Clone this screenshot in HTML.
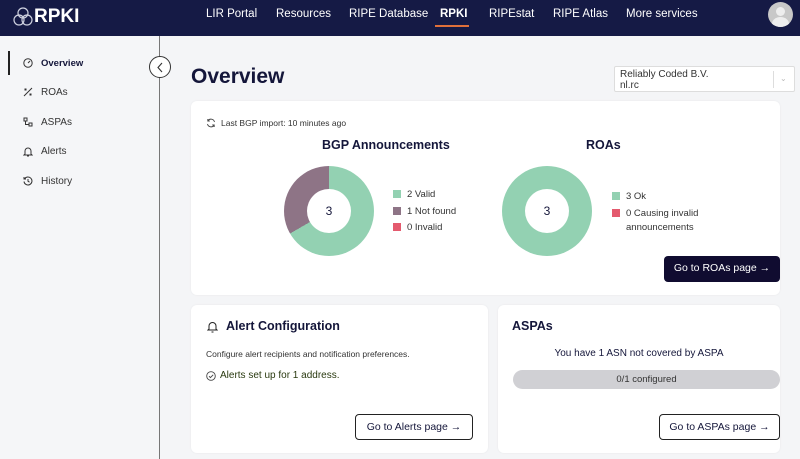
<!DOCTYPE html>
<html><head><style>
*{margin:0;padding:0;box-sizing:border-box}
body{width:800px;height:459px;overflow:hidden;background:#f4f5f7;font-family:"Liberation Sans",sans-serif;color:#14163a;position:relative}
.hdr{position:absolute;left:0;top:0;width:800px;height:36px;background:#151a45}
.hdr .logo{position:absolute;left:34px;top:6px;color:#fff;font-weight:bold;font-size:19px}
.nav{position:absolute;top:8px;color:#fff;font-size:11.5px}
.side{position:absolute;left:0;top:36px;width:160px;height:423px;background:#f5f6f8;border-right:1px solid #777}
.si{position:absolute;left:41px;font-size:10px;color:#333}
.ic{position:absolute;left:23px}
.card{position:absolute;background:#fff;border-radius:6px;box-shadow:0 0 2px rgba(0,0,0,.06)}
.btn{position:absolute;font-size:10.5px;border-radius:4px;text-align:center;line-height:24px;height:26px}
.lg{position:absolute;font-size:9.5px;color:#333}
.sq{display:inline-block;width:8px;height:8px;margin-right:6px;vertical-align:-1px}
</style></head><body>
<div class="hdr">
<svg style="position:absolute;left:12px;top:5px" width="22" height="24" viewBox="0 0 22 24" fill="none" stroke="#cfd2e0" stroke-width="1.2"><circle cx="11" cy="8" r="5"/><circle cx="7" cy="15" r="5"/><circle cx="15" cy="15" r="5"/></svg>
<div class="logo">RPKI</div>
<div class="nav" style="left:206px">LIR Portal</div>
<div class="nav" style="left:276px">Resources</div>
<div class="nav" style="left:349px">RIPE Database</div>
<div class="nav" style="left:440px;font-weight:bold">RPKI</div>
<div style="position:absolute;left:435px;top:25px;width:34px;height:2px;background:#e0703a"></div>
<div class="nav" style="left:489px">RIPEstat</div>
<div class="nav" style="left:553px">RIPE Atlas</div>
<div class="nav" style="left:626px">More services</div>
<div style="position:absolute;left:768px;top:2px;width:25px;height:25px;border-radius:50%;background:#c8c8c8;overflow:hidden"><div style="position:absolute;left:8px;top:5px;width:9px;height:9px;border-radius:50%;background:#eee"></div><div style="position:absolute;left:4px;top:15px;width:17px;height:14px;border-radius:50%;background:#eee"></div></div>
</div>
<div class="side">
<div style="position:absolute;left:8px;top:15px;width:2px;height:24px;background:#222"></div>
<svg class="ic" style="top:22px" width="10" height="10" viewBox="0 0 10 10" fill="none" stroke="#333" stroke-width="1"><circle cx="5" cy="5" r="4.2"/><path d="M5 5L7 3"/></svg>
<div class="si" style="top:22px;color:#14163a;font-weight:bold;font-size:9.5px">Overview</div>
<svg class="ic" style="top:51px" width="10" height="10" viewBox="0 0 10 10" fill="none" stroke="#333" stroke-width="1"><path d="M1 9L9 1M2 2h1v1h-1zM7 7h1v1h-1z"/></svg>
<div class="si" style="top:51px">ROAs</div>
<svg class="ic" style="top:81px" width="10" height="10" viewBox="0 0 10 10" fill="none" stroke="#333" stroke-width="1"><rect x="1" y="1" width="3" height="3"/><rect x="6" y="6" width="3" height="3"/><path d="M2.5 4v3.5H6"/></svg>
<div class="si" style="top:81px">ASPAs</div>
<svg class="ic" style="top:110px" width="10" height="11" viewBox="0 0 10 11" fill="none" stroke="#333" stroke-width="1"><path d="M2 8V5a3 3 0 016 0v3l1 1H1zM4 10h2"/></svg>
<div class="si" style="top:110px">Alerts</div>
<svg class="ic" style="top:140px" width="10" height="10" viewBox="0 0 10 10" fill="none" stroke="#333" stroke-width="1"><path d="M1.5 3A4 4 0 111 5.5M1 1v2h2M5 3v2.2l1.5 1"/></svg>
<div class="si" style="top:140px">History</div>
</div>
<div style="position:absolute;left:149px;top:56px;width:22px;height:22px;border-radius:50%;border:1px solid #333;background:#fff"><svg style="position:absolute;left:6px;top:5px" width="8" height="11" viewBox="0 0 8 11" fill="none" stroke="#333" stroke-width="1.1"><path d="M6 1L2 5.5 6 10"/></svg></div>
<div style="position:absolute;left:191px;top:65px;font-size:21px;font-weight:bold;color:#14163a">Overview</div>
<div style="position:absolute;left:614px;top:66px;width:181px;height:26px;background:#fff;border:1px solid #ddd;border-radius:2px;font-size:10px;color:#333;padding:2px 5px;line-height:11px">Reliably Coded B.V.<br>nl.rc<div style="position:absolute;left:158px;top:4px;width:1px;height:17px;background:#ddd"></div><span style="position:absolute;left:165px;top:6px;color:#bbb;font-size:8px">⌄</span></div>

<div class="card" style="left:191px;top:101px;width:589px;height:194px">
<svg style="position:absolute;left:15px;top:17px" width="10" height="10" viewBox="0 0 10 10" fill="none" stroke="#444" stroke-width="0.9"><path d="M8.5 4A3.7 3.7 0 001.8 2.8M1.5 6a3.7 3.7 0 006.7 1.2M1.8 1v2h2M8.2 9V7h-2"/></svg>
<div style="position:absolute;left:30px;top:17px;font-size:8.5px;color:#333">Last BGP import: 10 minutes ago</div>
<div style="position:absolute;left:131px;top:37px;font-size:12.5px;font-weight:bold">BGP Announcements</div>
<div style="position:absolute;left:395px;top:37px;font-size:12.5px;font-weight:bold">ROAs</div>
<div style="position:absolute;left:93px;top:65px;width:90px;height:90px;border-radius:50%;background:conic-gradient(#93d1b2 0 240deg,#8e7486 240deg 360deg)"></div>
<div style="position:absolute;left:116px;top:88px;width:44px;height:44px;border-radius:50%;background:#fff;text-align:center;line-height:44px;font-size:12px">3</div>
<div class="lg" style="left:202px;top:88px"><i class="sq" style="background:#93d1b2"></i>2 Valid</div>
<div class="lg" style="left:202px;top:105px"><i class="sq" style="background:#8e7486"></i>1 Not found</div>
<div class="lg" style="left:202px;top:121px"><i class="sq" style="background:#e45a6e"></i>0 Invalid</div>
<div style="position:absolute;left:311px;top:65px;width:90px;height:90px;border-radius:50%;background:#93d1b2"></div>
<div style="position:absolute;left:334px;top:88px;width:44px;height:44px;border-radius:50%;background:#fff;text-align:center;line-height:44px;font-size:12px">3</div>
<div class="lg" style="left:421px;top:90px"><i class="sq" style="background:#93d1b2"></i>3 Ok</div>
<div class="lg" style="left:421px;top:106px;line-height:14px"><i class="sq" style="background:#e45a6e"></i>0 Causing invalid<br><span style="padding-left:14px">announcements</span></div>
<div class="btn" style="left:473px;top:155px;width:116px;background:#100c30;color:#fff">Go to ROAs page →</div>
</div>

<div class="card" style="left:191px;top:305px;width:297px;height:148px">
<svg style="position:absolute;left:16px;top:15px" width="11" height="13" viewBox="0 0 11 13" fill="none" stroke="#222" stroke-width="1"><path d="M2 9V6a3.5 3.5 0 017 0v3l1 1H1zM4.5 12h2"/></svg>
<div style="position:absolute;left:35px;top:14px;font-size:12.5px;font-weight:bold">Alert Configuration</div>
<div style="position:absolute;left:15px;top:44px;font-size:8.5px;color:#333">Configure alert recipients and notification preferences.</div>
<svg style="position:absolute;left:15px;top:66px" width="10" height="10" viewBox="0 0 10 10" fill="none" stroke="#444" stroke-width="0.9"><circle cx="5" cy="5" r="4.3"/><path d="M3 5.2l1.4 1.4L7.2 3.8"/></svg>
<div style="position:absolute;left:29px;top:65px;font-size:10px;color:#2a3a10">Alerts set up for 1 address.</div>
<div class="btn" style="left:164px;top:109px;width:118px;border:1px solid #222">Go to Alerts page →</div>
</div>

<div class="card" style="left:498px;top:305px;width:282px;height:148px">
<div style="position:absolute;left:14px;top:14px;font-size:12.5px;font-weight:bold">ASPAs</div>
<div style="position:absolute;left:0;width:282px;top:43px;font-size:10px;text-align:center">You have 1 ASN not covered by ASPA</div>
<div style="position:absolute;left:15px;top:65px;width:267px;height:19px;border-radius:10px;background:#d0d0d4;text-align:center;line-height:19px;font-size:9.5px;color:#333">0/1 configured</div>
<div class="btn" style="left:161px;top:109px;width:121px;border:1px solid #222">Go to ASPAs page →</div>
</div>
</body></html>
